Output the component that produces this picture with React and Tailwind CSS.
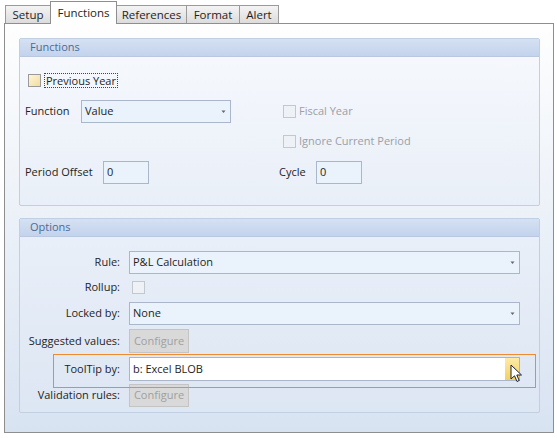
import React from 'react';

const font = { fontFamily: '"Open Sans", "Noto Sans", sans-serif' };

const Caret = () => (
  <svg width="7" height="4" viewBox="0 0 7 4" className="flex-shrink-0">
    <path d="M1.5 0.5 L5.5 0.5 L3.5 3 Z" fill="#666" />
  </svg>
);

const Select = ({ value, className = '', white = false, hot = false, noCaret = false }) => (
  <div
    className={`flex items-center h-full border ${
      white ? 'bg-white border-[#a9b6c8]' : 'bg-[#eaf2fc] border-[#aab7ca]'
    } ${className}`}
  >
    <span className="pl-[3px] flex-1 text-[#1e1e1e] truncate">{value}</span>
    {noCaret ? null : hot ? (
      <div className="h-full w-[14px] bg-gradient-to-b from-[#fdeba6] to-[#f6cf5e] flex items-center justify-center">
        <Caret />
      </div>
    ) : (
      <div className="w-[14px] flex items-center justify-center">
        <Caret />
      </div>
    )}
  </div>
);

const Checkbox = ({ disabled, hot }) => (
  <div
    className={`w-[13px] h-[13px] border flex-shrink-0 ${
      hot
        ? 'border-[#9a9a9a] bg-gradient-to-br from-[#fff5d8] to-[#f3dc9c]'
        : disabled
        ? 'border-[#c3c8cf] bg-[#eef2f7]'
        : 'border-[#a5acb5] bg-gradient-to-br from-[#e4e8ed] to-[#f8f9fb]'
    }`}
  />
);

const ConfigureBtn = () => (
  <div className="h-full w-[60px] bg-[#d9d9d9] border border-[#c4c4c4] flex items-center justify-center text-[#a0a0a0]">
    Configure
  </div>
);

const GroupHeader = ({ title }) => (
  <div className="h-[18px] bg-gradient-to-b from-[#d5e1f3] to-[#c3d3ec] border-b border-[#b9c8de] pl-[10px] flex items-center text-[#4d6a94]">
    {title}
  </div>
);

const Tab = ({ label, selected, className = '' }) =>
  selected ? (
    <div
      className={`h-[23px] -mb-px bg-white border border-b-0 border-[#8e8e8e] flex items-center justify-center relative z-10 ${className}`}
    >
      {label}
    </div>
  ) : (
    <div
      className={`h-[18px] bg-gradient-to-b from-[#f4f4f4] to-[#dcdcdc] border border-b-0 border-[#9a9a9a] flex items-center justify-center ${className}`}
    >
      {label}
    </div>
  );

const OptRow = ({ label, children, className = '' }) => (
  <div className={`flex items-center ${className}`}>
    <div className="w-[101px] text-right text-[#1e1e1e] pr-px">{label}</div>
    <div className="ml-[8px] h-full flex items-center">{children}</div>
  </div>
);

export default function App() {
  return (
    <div className="w-[557px] h-[438px] bg-white text-[11px] text-[#1e1e1e] overflow-hidden" style={font}>
      <div className="flex items-end pl-[5px] pt-px h-[23px] leading-none text-[11.5px]">
        <Tab label="Setup" className="w-[45px] border-r-0" />
        <Tab label="Functions" selected className="w-[67px]" />
        <Tab label="References" className="w-[70px] border-l-0" />
        <Tab label="Format" className="w-[53px] border-l-0" />
        <Tab label="Alert" className="w-[39px] border-l-0" />
      </div>

      <div className="ml-[4px] w-[550px] h-[410px] border border-[#8e8e8e] bg-gradient-to-b from-[#fefefe] to-[#d8e3f2] pt-[14px] pl-[14px]">
        {/* Functions group */}
        <div className="w-[521px] h-[168px] border border-[#c2cfe0] rounded-[2px] bg-gradient-to-b from-[#f7f9fd] to-[#e9eff8]">
          <GroupHeader title="Functions" />
          <div className="pl-[5px] pt-[16px]">
            <div className="h-[15px] flex items-center pl-[3px]">
              <Checkbox hot />
              <span className="ml-[3px] px-px border border-dotted border-[#444] leading-[13px]">Previous Year</span>
            </div>
            <div className="mt-[12px] h-[23px] flex">
              <div className="w-[254px] flex items-center">
                <span className="w-[56px]">Function</span>
                <Select value="Value" className="w-[150px]" />
              </div>
              <div className="flex items-center pl-[4px] text-[#9aa0a8]">
                <Checkbox disabled />
                <span className="ml-[3px]">Fiscal Year</span>
              </div>
            </div>
            <div className="mt-[10px] h-[17px] flex">
              <div className="w-[254px]" />
              <div className="flex items-center pl-[4px] text-[#9aa0a8]">
                <Checkbox disabled />
                <span className="ml-[3px]">Ignore Current Period</span>
              </div>
            </div>
            <div className="mt-[11px] h-[23px] flex">
              <div className="w-[254px] flex items-center">
                <span className="w-[78px]">Period Offset</span>
                <Select value="0" className="w-[46px]" noCaret />
              </div>
              <div className="flex items-center">
                <span className="w-[37px]">Cycle</span>
                <Select value="0" className="w-[46px]" noCaret />
              </div>
            </div>
          </div>
        </div>

        {/* Options group */}
        <div className="mt-[12px] w-[521px] h-[195px] border border-[#c2cfe0] rounded-[2px] bg-gradient-to-b from-[#eaf0f9] to-[#dde6f3]">
          <GroupHeader title="Options" />
          <div className="relative pt-[14px]">
            <OptRow label="Rule:" className="h-[23px]">
              <Select value="P&L Calculation" className="w-[391px]" />
            </OptRow>
            <OptRow label="Rollup:" className="mt-[3px] h-[21px]">
              <div className="ml-[3px]">
                <Checkbox disabled />
              </div>
            </OptRow>
            <OptRow label="Locked by:" className="mt-[4px] h-[23px]">
              <Select value="None" className="w-[391px]" />
            </OptRow>
            <OptRow label="Suggested values:" className="mt-[4px] h-[24px]">
              <ConfigureBtn />
            </OptRow>
            <OptRow label="ToolTip by:" className="mt-[4px] h-[24px]">
              <Select value="b: Excel BLOB" className="w-[391px]" white hot />
            </OptRow>
            <OptRow label="Validation rules:" className="mt-[3px] h-[23px]">
              <ConfigureBtn />
            </OptRow>

            {/* focus adorner */}
            <div className="absolute z-10 left-[33px] top-[117px] w-[483px] h-[34px] border border-[#f08a30] pointer-events-none" />
            {/* mouse cursor */}
            <svg className="absolute z-20 left-[490px] top-[127px]" width="13" height="20" viewBox="0 0 13 20">
              <path
                d="M1 1 L1 15 L4.5 11.8 L7 17.5 L9.2 16.5 L6.8 11 L11.5 11 Z"
                fill="#fff"
                stroke="#1b2233"
                strokeWidth="1"
                strokeLinejoin="round"
              />
            </svg>
          </div>
        </div>
      </div>
    </div>
  );
}
